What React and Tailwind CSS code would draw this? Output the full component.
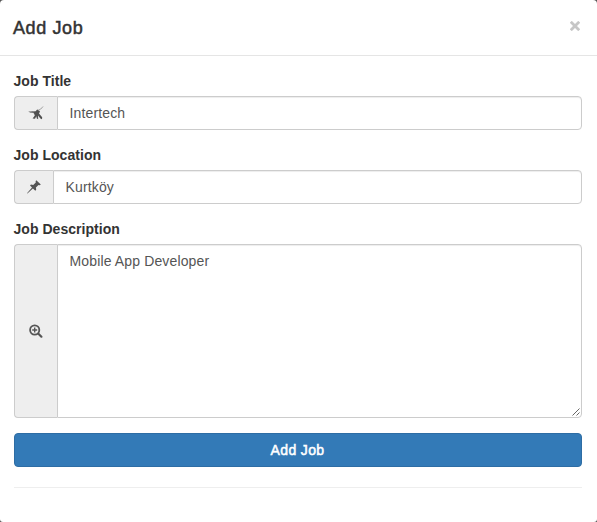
import React from "react";

function ToolIcon() {
  return (
    <svg className="mr-px" width="16" height="14" viewBox="0 0 16 14" fill="#505050">
      <path d="M3.4 5.4 7.6 5.2 9.2 3.6 10.8 4.2 12 5.4 11 7.6 14.2 11.2 14 13.2 12.4 12.6 10 9.4 10.2 13.2 8.8 12.6 8.3 10.2 7 12.8 4.6 12.6 6.8 9.4 6 7.4Z" />
      <path d="M.2 5.6 4.4 5.2 6.2 7 2.4 6.8Z" fill="#777" />
      <path d="M10 4.4 12.8 3 15 .5" fill="none" stroke="#999" strokeWidth=".9" />
    </svg>
  );
}

function PinIcon() {
  return (
    <svg width="14" height="14" viewBox="0 0 14 14" fill="#555">
      <path d="M9.3.2 13.8 4.6 12.7 5.3 11.5 5 8.9 7.6 9.2 9.8 8.3 10.8 5.9 8.5.4 13.6 0 13.3 5 7.6 3 5.6 4 4.6 6.2 4.9 8.8 2.5 8.6 1.2Z" />
    </svg>
  );
}

function ZoomInIcon() {
  return (
    <svg className="mr-px" width="14" height="14" viewBox="0 0 14 14" fill="none" stroke="#555">
      <circle cx="5.7" cy="6" r="4.6" strokeWidth="1.8" />
      <path d="M5.7 3.5v5M3.2 6h5" strokeWidth="1.4" />
      <path d="m9.4 9.7 3 3" strokeWidth="2.2" strokeLinecap="round" />
    </svg>
  );
}

const field =
  "min-w-0 flex-1 rounded-r-[4px] border border-[#ccc] bg-white pr-[11px] pl-[11.5px] py-1.5 text-[14px] leading-5 tracking-[0.14px] text-[#555] shadow-[inset_0_1px_1px_rgba(0,0,0,0.075)] outline-none";
const addon =
  "flex shrink-0 items-center justify-center rounded-l-[4px] border border-r-0 border-[#ccc] bg-[#eee]";
const label = "mb-[5px] block h-5 text-[14px] leading-5 font-bold tracking-[0.04px]";

export default function App() {
  return (
    <div className="h-[522px] w-[597px] overflow-hidden bg-[#555]">
      <div className="h-full rounded-t-[4px] rounded-b-[3px] bg-white font-['Liberation_Sans',Arial,sans-serif] text-[#333]">
        <header className="flex h-14 items-start justify-between border-b border-[#e5e5e5] pt-[15px] pr-[15px] pl-[13px]">
          <h4 className="text-[18px] leading-[26px] font-normal tracking-[0.6px] [-webkit-text-stroke:0.5px_#333]">Add Job</h4>
          <button className="flex h-[21px] w-[14px] items-center justify-center" aria-label="Close">
            <svg width="10" height="10" viewBox="0 0 10 10" stroke="#c6c6c6" strokeWidth="2.8">
              <path d="m.8.8 8.4 8.4M9.2.8.8 9.2" />
            </svg>
          </button>
        </header>
        <form className="pt-[15px] pr-[15px] pl-3.5" onSubmit={(e) => e.preventDefault()}>
          <div className="mb-[15px]">
            <label className={label} htmlFor="title"><span className="-ml-[0.5px]">Job Title</span></label>
            <div className="flex h-[34px]">
              <span className={`${addon} w-[43px]`}><ToolIcon /></span>
              <input id="title" className={field} defaultValue="Intertech" />
            </div>
          </div>
          <div className="mb-[15px]">
            <label className={label} htmlFor="location"><span className="-ml-[0.5px]">Job Location</span></label>
            <div className="flex h-[34px]">
              <span className={`${addon} w-[39px]`}><PinIcon /></span>
              <input id="location" className={field} defaultValue="Kurtköy" />
            </div>
          </div>
          <div className="mb-[15px]">
            <label className={label} htmlFor="description"><span className="-ml-[0.5px]">Job Description</span></label>
            <div className="relative flex h-[174px]">
              <span className={`${addon} w-[43px]`}><ZoomInIcon /></span>
              <textarea id="description" className={`${field} resize-none`} defaultValue="Mobile App Developer" />
              <svg className="pointer-events-none absolute right-[2px] bottom-[2px]" width="8" height="8" viewBox="0 0 8 8" stroke="#555" strokeWidth=".9">
                <path d="M.5 7.5l7-7M4.5 7.5l3-3" />
              </svg>
            </div>
          </div>
          <button className="block h-[34px] w-full rounded-[4px] border border-[#2e6da4] bg-[#337ab7] pr-px text-[14px] leading-5 tracking-[0.35px] text-white [-webkit-text-stroke:0.5px_white]">
            Add Job
          </button>
          <hr className="mt-5 border-t border-[#eee]" />
        </form>
      </div>
    </div>
  );
}
